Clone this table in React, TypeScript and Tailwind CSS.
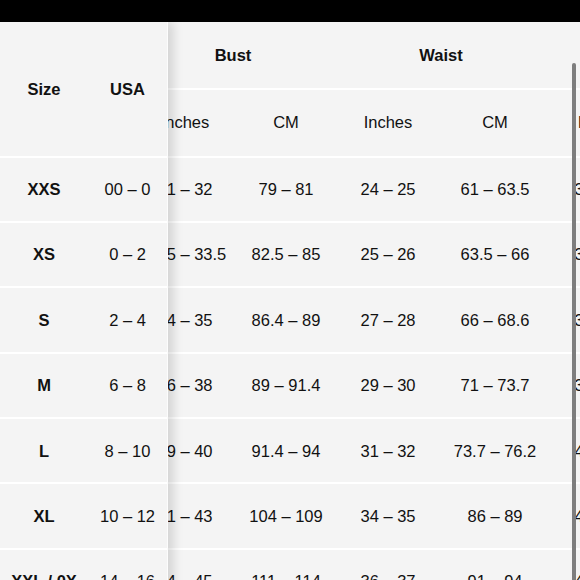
import React from "react";

const rows = [
  ["XXS", "00 – 0", "31 – 32", "79 – 81", "24 – 25", "61 – 63.5", "33 – 34", "84 – 86"],
  ["XS", "0 – 2", "32.5 – 33.5", "82.5 – 85", "25 – 26", "63.5 – 66", "34 – 35", "86 – 89"],
  ["S", "2 – 4", "34 – 35", "86.4 – 89", "27 – 28", "66 – 68.6", "36 – 37", "91 – 94"],
  ["M", "6 – 8", "36 – 38", "89 – 91.4", "29 – 30", "71 – 73.7", "38 – 39", "96 – 99"],
  ["L", "8 – 10", "39 – 40", "91.4 – 94", "31 – 32", "73.7 – 76.2", "40 – 41", "101 – 104"],
  ["XL", "10 – 12", "41 – 43", "104 – 109", "34 – 35", "86 – 89", "42 – 44", "107 – 112"],
  ["XXL / 0X", "14 – 16", "44 – 45", "111 – 114", "36 – 37", "91 – 94", "46 – 47", "117 – 119"],
];

const cols = "grid grid-cols-[106px_96px_108px_106px_108px_108px_108px]";

export default function App() {
  return (
    <div
      className="relative w-[580px] h-[580px] overflow-hidden bg-[#f4f4f4] text-[#111] text-[16.5px] leading-none"
      style={{ fontFamily: '"Liberation Sans", Arial, sans-serif' }}
    >
      <div className="h-[22px] bg-black" />
      <div className="flex">
        {/* sticky left columns */}
        <div className="relative z-10 w-[168px] shrink-0 bg-[#f4f4f4] border-r border-white/70 shadow-[5px_0_10px_rgba(0,0,0,0.14)]">
          <div className="flex h-[135.5px] border-b-2 border-white font-bold">
            <div className="w-[88px] flex items-center justify-center">Size</div>
            <div className="flex-1 flex items-center justify-center">USA</div>
          </div>
          {rows.map((r) => (
            <div key={r[0]} className="flex h-[65.4px] border-b-2 border-white">
              <div className="w-[88px] flex items-center justify-center font-bold whitespace-nowrap">{r[0]}</div>
              <div className="flex-1 flex items-center justify-center whitespace-nowrap">{r[1]}</div>
            </div>
          ))}
        </div>
        {/* scrolled measurement columns */}
        <div className="flex-1 overflow-hidden">
          <div className="ml-[-36px] w-[740px]">
            <div className="flex h-[67.5px] border-b-2 border-white font-bold">
              <div className="w-[202px] flex items-center justify-center">Bust</div>
              <div className="w-[214px] flex items-center justify-center">Waist</div>
              <div className="w-[216px] flex items-center justify-center">Hips</div>
            </div>
            <div className={`${cols} h-[68px] border-b-2 border-white`}>
              {["Inches", "CM", "Inches", "CM", "Inches", "CM"].map((h, i) => (
                <div key={i} className="flex items-center justify-center">{h}</div>
              ))}
            </div>
            {rows.map((r) => (
              <div key={r[0]} className={`${cols} h-[65.4px] border-b-2 border-white`}>
                {r.slice(2).map((v, i) => (
                  <div key={i} className="flex items-center justify-center whitespace-nowrap">{v}</div>
                ))}
              </div>
            ))}
          </div>
        </div>
      </div>
      {/* overlay scrollbar */}
      <div className="absolute left-[572px] top-[63px] w-[3.5px] h-[560px] rounded-full bg-[#7e7e7e]" />
    </div>
  );
}
